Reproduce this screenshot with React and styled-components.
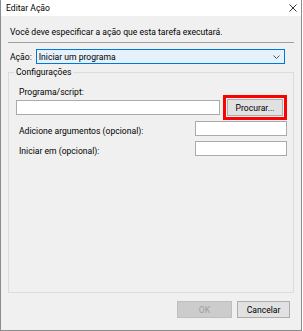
import React from "react";
import styled, { createGlobalStyle } from "styled-components";

const GlobalStyle = createGlobalStyle`
  html, body {
    margin: 0;
    padding: 0;
    background: #ffffff;
  }
  body {
    font-family: Roboto, "Liberation Sans", Arial, sans-serif;
    font-size: 8.6px;
    color: #000;
  }
`;

// Dialog window
const Window = styled.div`
  width: 302px;
  height: 331px;
  box-sizing: border-box;
  border: 1px solid #8c8c8c;
  border-top: none;
  display: flex;
  flex-direction: column;
  background: #f0f0f0;
`;

const TitleBar = styled.div`
  height: 16px;
  flex: none;
  background: #ffffff;
  display: flex;
  align-items: center;
  justify-content: space-between;
  padding: 0 4px 0 5px;
`;

const Title = styled.span`
  line-height: 16px;
`;

const CloseIcon = () => (
  <svg width="8" height="8" viewBox="0 0 8 8">
    <path d="M0.5 0.5 L7.5 7.5 M7.5 0.5 L0.5 7.5" stroke="#333" strokeWidth="1" />
  </svg>
);

const Body = styled.div`
  flex: 1;
  display: flex;
  flex-direction: column;
  padding: 11px 7px 12px 7px;
`;

const Instruction = styled.div`
  line-height: 11px;
  padding-left: 2px;
`;

const Separator = styled.div`
  height: 1px;
  background: #a0a0a0;
  margin: 4px 0 6px;
`;

const ActionRow = styled.div`
  display: flex;
  align-items: center;
  gap: 4px;
  padding-left: 2px;
  padding-right: 9px;
`;

const Combo = styled.div`
  flex: 1;
  height: 15px;
  box-sizing: border-box;
  border: 1px solid #0078d7;
  background: #e5f1fb;
  display: flex;
  align-items: center;
  justify-content: space-between;
  padding: 0 4px 0 2px;
`;

const Chevron = () => (
  <svg width="7" height="4" viewBox="0 0 7 4">
    <path d="M0.5 0.5 L3.5 3.5 L6.5 0.5" stroke="#555" strokeWidth="1" fill="none" />
  </svg>
);

const Group = styled.fieldset`
  flex: 1;
  margin: 3px 0 0;
  border: 1px solid #dcdcdc;
  padding: 0 6px 0 7px;
  min-width: 0;
`;

const Legend = styled.legend`
  padding: 0 2px;
  margin-left: -2px;
  line-height: 11px;
`;

const FieldLabel = styled.div`
  line-height: 11px;
  padding-left: 3px;
  margin-top: 9px;
`;

const PathRow = styled.div`
  display: flex;
  align-items: center;
  gap: 7px;
  margin-top: 1px;
  padding-right: 4px;
`;

const TextBox = styled.div`
  height: 15px;
  box-sizing: border-box;
  border: 1px solid #ababab;
  background: #ffffff;
  flex: ${(p) => (p.$grow ? 1 : "none")};
  width: ${(p) => (p.$width ? `${p.$width}px` : "auto")};
`;

const Button = styled.div`
  height: 17px;
  box-sizing: border-box;
  width: ${(p) => p.$width}px;
  display: flex;
  align-items: center;
  justify-content: center;
  border: 1px solid ${(p) => (p.$disabled ? "#bfbfbf" : "#adadad")};
  background: ${(p) => (p.$disabled ? "#cccccc" : "#e1e1e1")};
  color: ${(p) => (p.$disabled ? "#a0a0a0" : "#000")};
  outline: ${(p) => (p.$highlight ? "3px solid #ff0000" : "none")};
  outline-offset: 1px;
`;

const OptionRow = styled.div`
  display: flex;
  align-items: center;
  justify-content: space-between;
  margin-top: ${(p) => p.$top}px;
`;

const OptionLabel = styled.span`
  padding-left: 3px;
  padding-top: 6px;
  line-height: 11px;
`;

const Footer = styled.div`
  display: flex;
  justify-content: flex-end;
  gap: 5px;
  margin-top: 8px;
  padding-right: 4px;
`;

export default function App() {
  return (
    <>
      <GlobalStyle />
      <Window>
        <TitleBar>
          <Title>Editar Ação</Title>
          <CloseIcon />
        </TitleBar>
        <Body>
          <Instruction>Você deve especificar a ação que esta tarefa executará.</Instruction>
          <Separator />
          <ActionRow>
            <span>Ação:</span>
            <Combo>
              <span>Iniciar um programa</span>
              <Chevron />
            </Combo>
          </ActionRow>
          <Group>
            <Legend>Configurações</Legend>
            <FieldLabel>Programa/script:</FieldLabel>
            <PathRow>
              <TextBox $grow />
              <Button $width={56} $highlight>
                Procurar...
              </Button>
            </PathRow>
            <OptionRow $top={4}>
              <OptionLabel>Adicione argumentos (opcional):</OptionLabel>
              <TextBox $width={92} />
            </OptionRow>
            <OptionRow $top={3}>
              <OptionLabel>Iniciar em (opcional):</OptionLabel>
              <TextBox $width={92} />
            </OptionRow>
          </Group>
          <Footer>
            <Button $width={55} $disabled>
              OK
            </Button>
            <Button $width={53}>Cancelar</Button>
          </Footer>
        </Body>
      </Window>
    </>
  );
}
